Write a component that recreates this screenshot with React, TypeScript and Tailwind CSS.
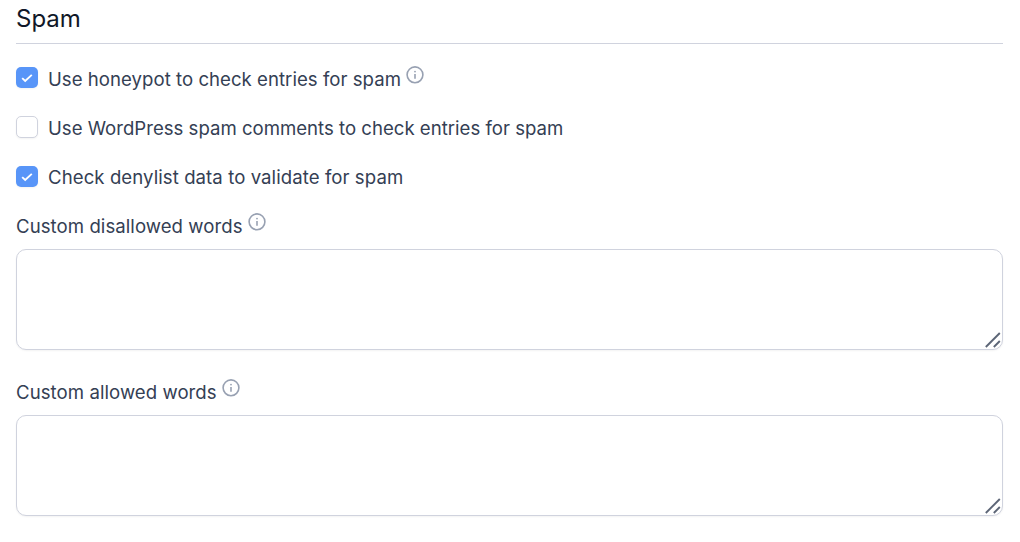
import React from 'react';

interface CheckRowProps {
  label: string;
  checked?: boolean;
  info?: boolean;
  boxClass?: string;
  labelClass?: string;
}

const InfoIcon: React.FC = () => (
  <svg className="-mt-[9px] ml-[5px] size-[18px] shrink-0" viewBox="0 0 18 18" fill="none" stroke="#98a1b2" strokeWidth="1.6">
    <circle cx="9" cy="8.8" r="7.9" />
    <path d="M9 8v4.8" />
    <circle cx="9" cy="5.6" r="0.9" fill="#98a1b2" stroke="none" />
  </svg>
);

const CheckRow: React.FC<CheckRowProps> = ({ label, checked, info, boxClass = '-mt-[3px]', labelClass = '' }) => (
  <div className="flex h-6 items-center">
    {checked ? (
      <span className={`mr-[10px] flex h-[21px] w-[22px] items-center justify-center rounded-[5px] bg-[#5895f8] shadow-xs ${boxClass}`}>
        <svg className="size-[12px]" viewBox="0 0 12 12" fill="none" stroke="white" strokeWidth="1.9">
          <path d="M1.2 6.1 4.2 9l6.6-6.1" />
        </svg>
      </span>
    ) : (
      <span className="mr-[10px] -mt-[2px] size-[22px] rounded-[5px] border border-[#d0d3de] bg-white shadow-xs" />
    )}
    <span className={`relative top-px ${labelClass}`}>{label}</span>
    {info && <InfoIcon />}
  </div>
);

const WordsField: React.FC<{ label: string }> = ({ label }) => (
  <div>
    <div className="flex h-6 items-center">
      <span className="relative top-px tracking-[0.06px]">{label}</span>
      <InfoIcon />
    </div>
    <div className="mt-[11px] flex h-[101px] items-end justify-end rounded-[10px] border border-[#d0d3de] bg-white shadow-xs">
      <svg className="size-[17px]" viewBox="0 0 17 17" fill="none" stroke="#5d6677" strokeWidth="1.9">
        <path d="M.8 15 14.8 1M8.8 15l6-6" />
      </svg>
    </div>
  </div>
);

export default function App() {
  return (
    <div className="h-[542px] bg-white pr-[17px] pl-4 font-['Inter',sans-serif] text-[18.6px] text-[#344054]">
      <h2 className="h-[44px] border-b border-[#d0d3de] pt-[4px] text-[24px] leading-[30px] text-[#101828]">Spam</h2>
      <div className="flex flex-col gap-[25px] pt-[23px]">
        <CheckRow label="Use honeypot to check entries for spam" checked info labelClass="tracking-[0.03px]" />
        <CheckRow label="Use WordPress spam comments to check entries for spam" />
        <CheckRow label="Check denylist data to validate for spam" checked boxClass="-mt-px" labelClass="tracking-[0.07px]" />
      </div>
      <div className="flex flex-col gap-[30px] pt-[25px]">
        <WordsField label="Custom disallowed words" />
        <WordsField label="Custom allowed words" />
      </div>
    </div>
  );
}
